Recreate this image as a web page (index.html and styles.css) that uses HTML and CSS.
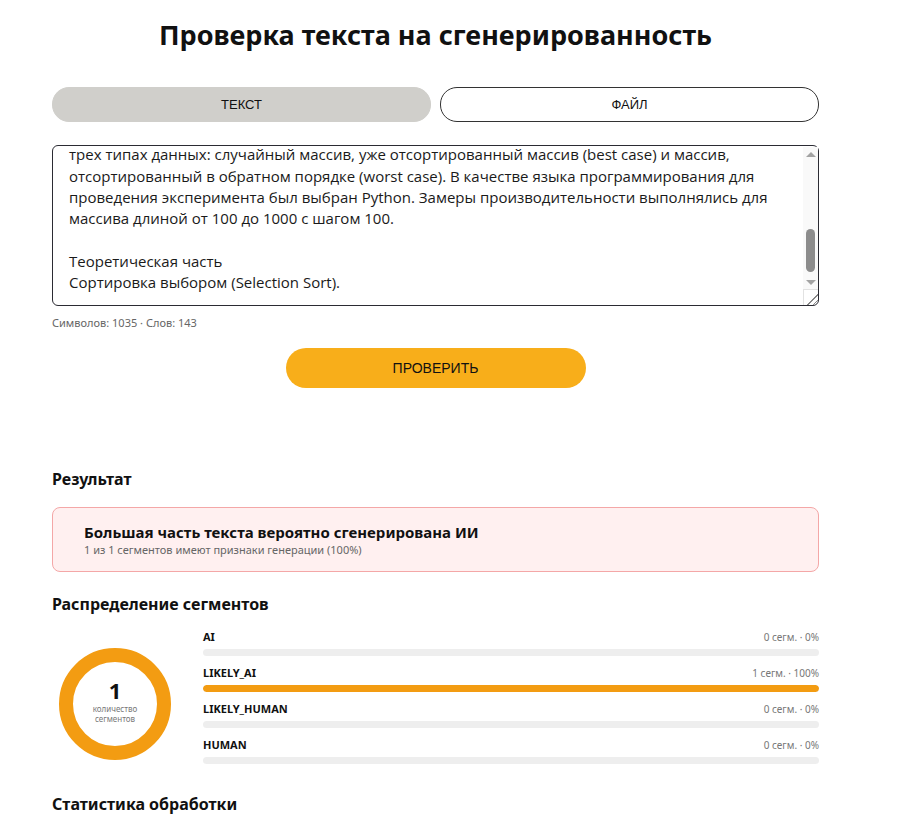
FILE: index.html
```html
<!DOCTYPE html>
<html lang="ru">
<head>
<meta charset="utf-8">
<meta name="viewport" content="width=device-width, initial-scale=1.0">
<title>Проверка текста на сгенерированность</title>
<link rel="stylesheet" href="styles.css">
</head>
<body>
<div class="page">
	<h1 class="title">Проверка текста на сгенерированность</h1>

	<div class="tabs">
		<button class="tab active">ТЕКСТ</button>
		<button class="tab">ФАЙЛ</button>
	</div>

	<div class="editor">
		<textarea id="src" class="src">Лабораторная работа №2
Исследование алгоритмов сортировки

Введение
В данной работе рассматриваются простые алгоритмы сортировки и проводится
экспериментальное сравнение их производительности. Основное внимание
уделено сортировке выбором и сортировке вставками, которые имеют
квадратичную сложность, но по-разному ведут себя на упорядоченных данных.

Цель работы — реализовать указанные алгоритмы и измерить время их работы на
трех типах данных: случайный массив, уже отсортированный массив (best case) и массив,
отсортированный в обратном порядке (worst case). В качестве языка программирования для
проведения эксперимента был выбран Python. Замеры производительности выполнялись для
массива длиной от 100 до 1000 с шагом 100.

Теоретическая часть
Сортировка выбором (Selection Sort).

Алгоритм находит минимальный элемент и меняет его местами с первым.</textarea>
		<div class="vscroll" aria-hidden="true">
			<span class="arrow up"></span>
			<span class="track"><span class="thumb"></span></span>
			<span class="arrow down"></span>
		</div>
		<div class="resizer" aria-hidden="true"></div>
	</div>
	<div class="counter">Символов: 1035 · Слов: 143</div>

	<div class="actions">
		<button class="check">ПРОВЕРИТЬ</button>
	</div>

	<h2 class="section">Результат</h2>
	<div class="verdict">
		<div class="verdict-title">Большая часть текста вероятно сгенерирована ИИ</div>
		<div class="verdict-sub">1 из 1 сегментов имеют признаки генерации (100%)</div>
	</div>

	<h2 class="section">Распределение сегментов</h2>
	<div class="dist">
		<div class="donut">
			<svg width="112" height="112" viewBox="0 0 112 112">
				<circle cx="56" cy="56" r="49" fill="none" stroke="#f39c12" stroke-width="14"/>
			</svg>
			<div class="donut-label">
				<div class="donut-num">1</div>
				<div class="donut-cap">количество<br>сегментов</div>
			</div>
		</div>
		<div class="bars">
			<div class="bar-row">
				<div class="bar-head"><span class="bar-name">AI</span><span class="bar-val">0 сегм. · 0%</span></div>
				<div class="bar"><div class="bar-fill" style="width:0%"></div></div>
			</div>
			<div class="bar-row">
				<div class="bar-head"><span class="bar-name">LIKELY_AI</span><span class="bar-val">1 сегм. · 100%</span></div>
				<div class="bar"><div class="bar-fill" style="width:100%"></div></div>
			</div>
			<div class="bar-row">
				<div class="bar-head"><span class="bar-name">LIKELY_HUMAN</span><span class="bar-val">0 сегм. · 0%</span></div>
				<div class="bar"><div class="bar-fill" style="width:0%"></div></div>
			</div>
			<div class="bar-row">
				<div class="bar-head"><span class="bar-name">HUMAN</span><span class="bar-val">0 сегм. · 0%</span></div>
				<div class="bar"><div class="bar-fill" style="width:0%"></div></div>
			</div>
		</div>
	</div>

	<h2 class="section">Статистика обработки</h2>
</div>
<script src="script.js"></script>
</body>
</html>
```

FILE: styles.css
```css
html, body {
	margin: 0;
	overflow: hidden;
}
body {
	font-family: "Noto Sans", "Open Sans", sans-serif;
	color: #111;
	background: #fff;
}
.page {
	width: 767px;
	margin-left: 52px;
}
.title {
	font-size: 27px;
	font-weight: 700;
	text-align: center;
	margin: 16px 0 0;
	line-height: 38px;
}
/* tabs */
.tabs {
	display: flex;
	gap: 9px;
	margin-top: 33px;
}
.tab {
	flex: 1;
	height: 35px;
	border-radius: 17px;
	border: 1px solid #333;
	background: #fff;
	font-family: "Liberation Sans", sans-serif;
	font-size: 13px;
	color: #111;
}
.tab.active {
	background: #d0cfcb;
	border-color: #d0cfcb;
}
/* textarea */
.editor {
	position: relative;
	margin-top: 23px;
}
.src {
	display: block;
	box-sizing: border-box;
	width: 100%;
	height: 161px;
	padding: 12px 32px 12px 16px;
	border: 1px solid #2b2b33;
	border-radius: 6px;
	font-family: "Open Sans", sans-serif;
	font-size: 15px;
	line-height: 21.33px;
	color: #1a1a1a;
	white-space: pre;
	overflow: hidden;
	resize: none;
}
.vscroll {
	position: absolute;
	top: 2px;
	right: 1px;
	bottom: 16px;
	width: 15px;
	display: flex;
	flex-direction: column;
	background: #f9f9f9;
}
.arrow {
	height: 15px;
	display: flex;
	align-items: center;
	justify-content: center;
}
.arrow::before {
	content: "";
	border-left: 5px solid transparent;
	border-right: 5px solid transparent;
}
.arrow.up::before {
	border-bottom: 5px solid #a3a3a3;
}
.arrow.down::before {
	border-top: 5px solid #a3a3a3;
}
.track {
	flex: 1;
	display: flex;
	flex-direction: column;
	justify-content: flex-end;
	padding: 0 3px 3px;
}
.thumb {
	height: 43px;
	border-radius: 5px;
	background: #8c8c8c;
}
.resizer {
	position: absolute;
	right: 1px;
	bottom: 1px;
	width: 14px;
	height: 15px;
	border-top: 1px solid #e2e2e2;
	border-left: 1px solid #e2e2e2;
	border-bottom-right-radius: 5px;
	background:
		linear-gradient(135deg, transparent 62%, #888 62%, #888 68%, transparent 68%, transparent 80%, #888 80%, #888 86%, transparent 86%);
}
.counter {
	font-size: 11px;
	color: #666;
	margin-top: 9px;
}
.actions {
	display: flex;
	justify-content: center;
	margin-top: 18px;
}
.check {
	width: 300px;
	height: 40px;
	border: none;
	border-radius: 20px;
	background: #f8ae1a;
	font-family: "Liberation Sans", sans-serif;
	font-size: 14px;
	color: #111;
}
/* results */
.section {
	font-size: 16px;
	font-weight: 700;
	margin: 0;
	line-height: 22px;
}
.actions + .section {
	margin-top: 80px;
}
.verdict {
	margin-top: 17px;
	padding: 14px 31px 14px;
	border: 1px solid #f4a7a7;
	border-radius: 8px;
	background: #fff0f0;
}
.verdict-title {
	font-size: 15px;
	font-weight: 700;
	line-height: 20px;
}
.verdict-sub {
	font-size: 11px;
	color: #666;
	line-height: 15px;
}
.verdict + .section {
	margin-top: 21px;
}
/* distribution */
.dist {
	display: flex;
	align-items: flex-start;
	margin-top: 14px;
	gap: 32px;
}
.donut {
	position: relative;
	width: 112px;
	height: 112px;
	margin: 19px 0 0 7px;
}
.donut svg {
	display: block;
}
.donut-label {
	position: absolute;
	inset: 0 0 6px;
	display: flex;
	flex-direction: column;
	align-items: center;
	justify-content: center;
}
.donut-num {
	font-size: 22px;
	font-weight: 700;
	line-height: 22px;
	margin-bottom: 3px;
}
.donut-cap {
	font-size: 8px;
	line-height: 10px;
	color: #777;
	text-align: center;
}
.bars {
	flex: 1;
}
.bar-row {
	height: 36px;
}
.bar-head {
	display: flex;
	justify-content: space-between;
	align-items: baseline;
	height: 20px;
}
.bar-name {
	font-size: 11px;
	font-weight: 700;
}
.bar-val {
	font-size: 10px;
	color: #777;
}
.bar {
	height: 7px;
	border-radius: 4px;
	background: #eee;
	overflow: hidden;
}
.bar-fill {
	height: 100%;
	background: #f39c12;
	border-radius: 4px;
}
.dist + .section {
	margin-top: 20px;
}
```

FILE: script.js
```js
const ta = document.getElementById("src");
const lh = 21.33;
// show the part with "трех типах данных"
const lines = ta.value.split("\n");
const idx = lines.findIndex(l => l.startsWith("трех"));
ta.scrollTop = 12 + idx * lh + 2;
```
